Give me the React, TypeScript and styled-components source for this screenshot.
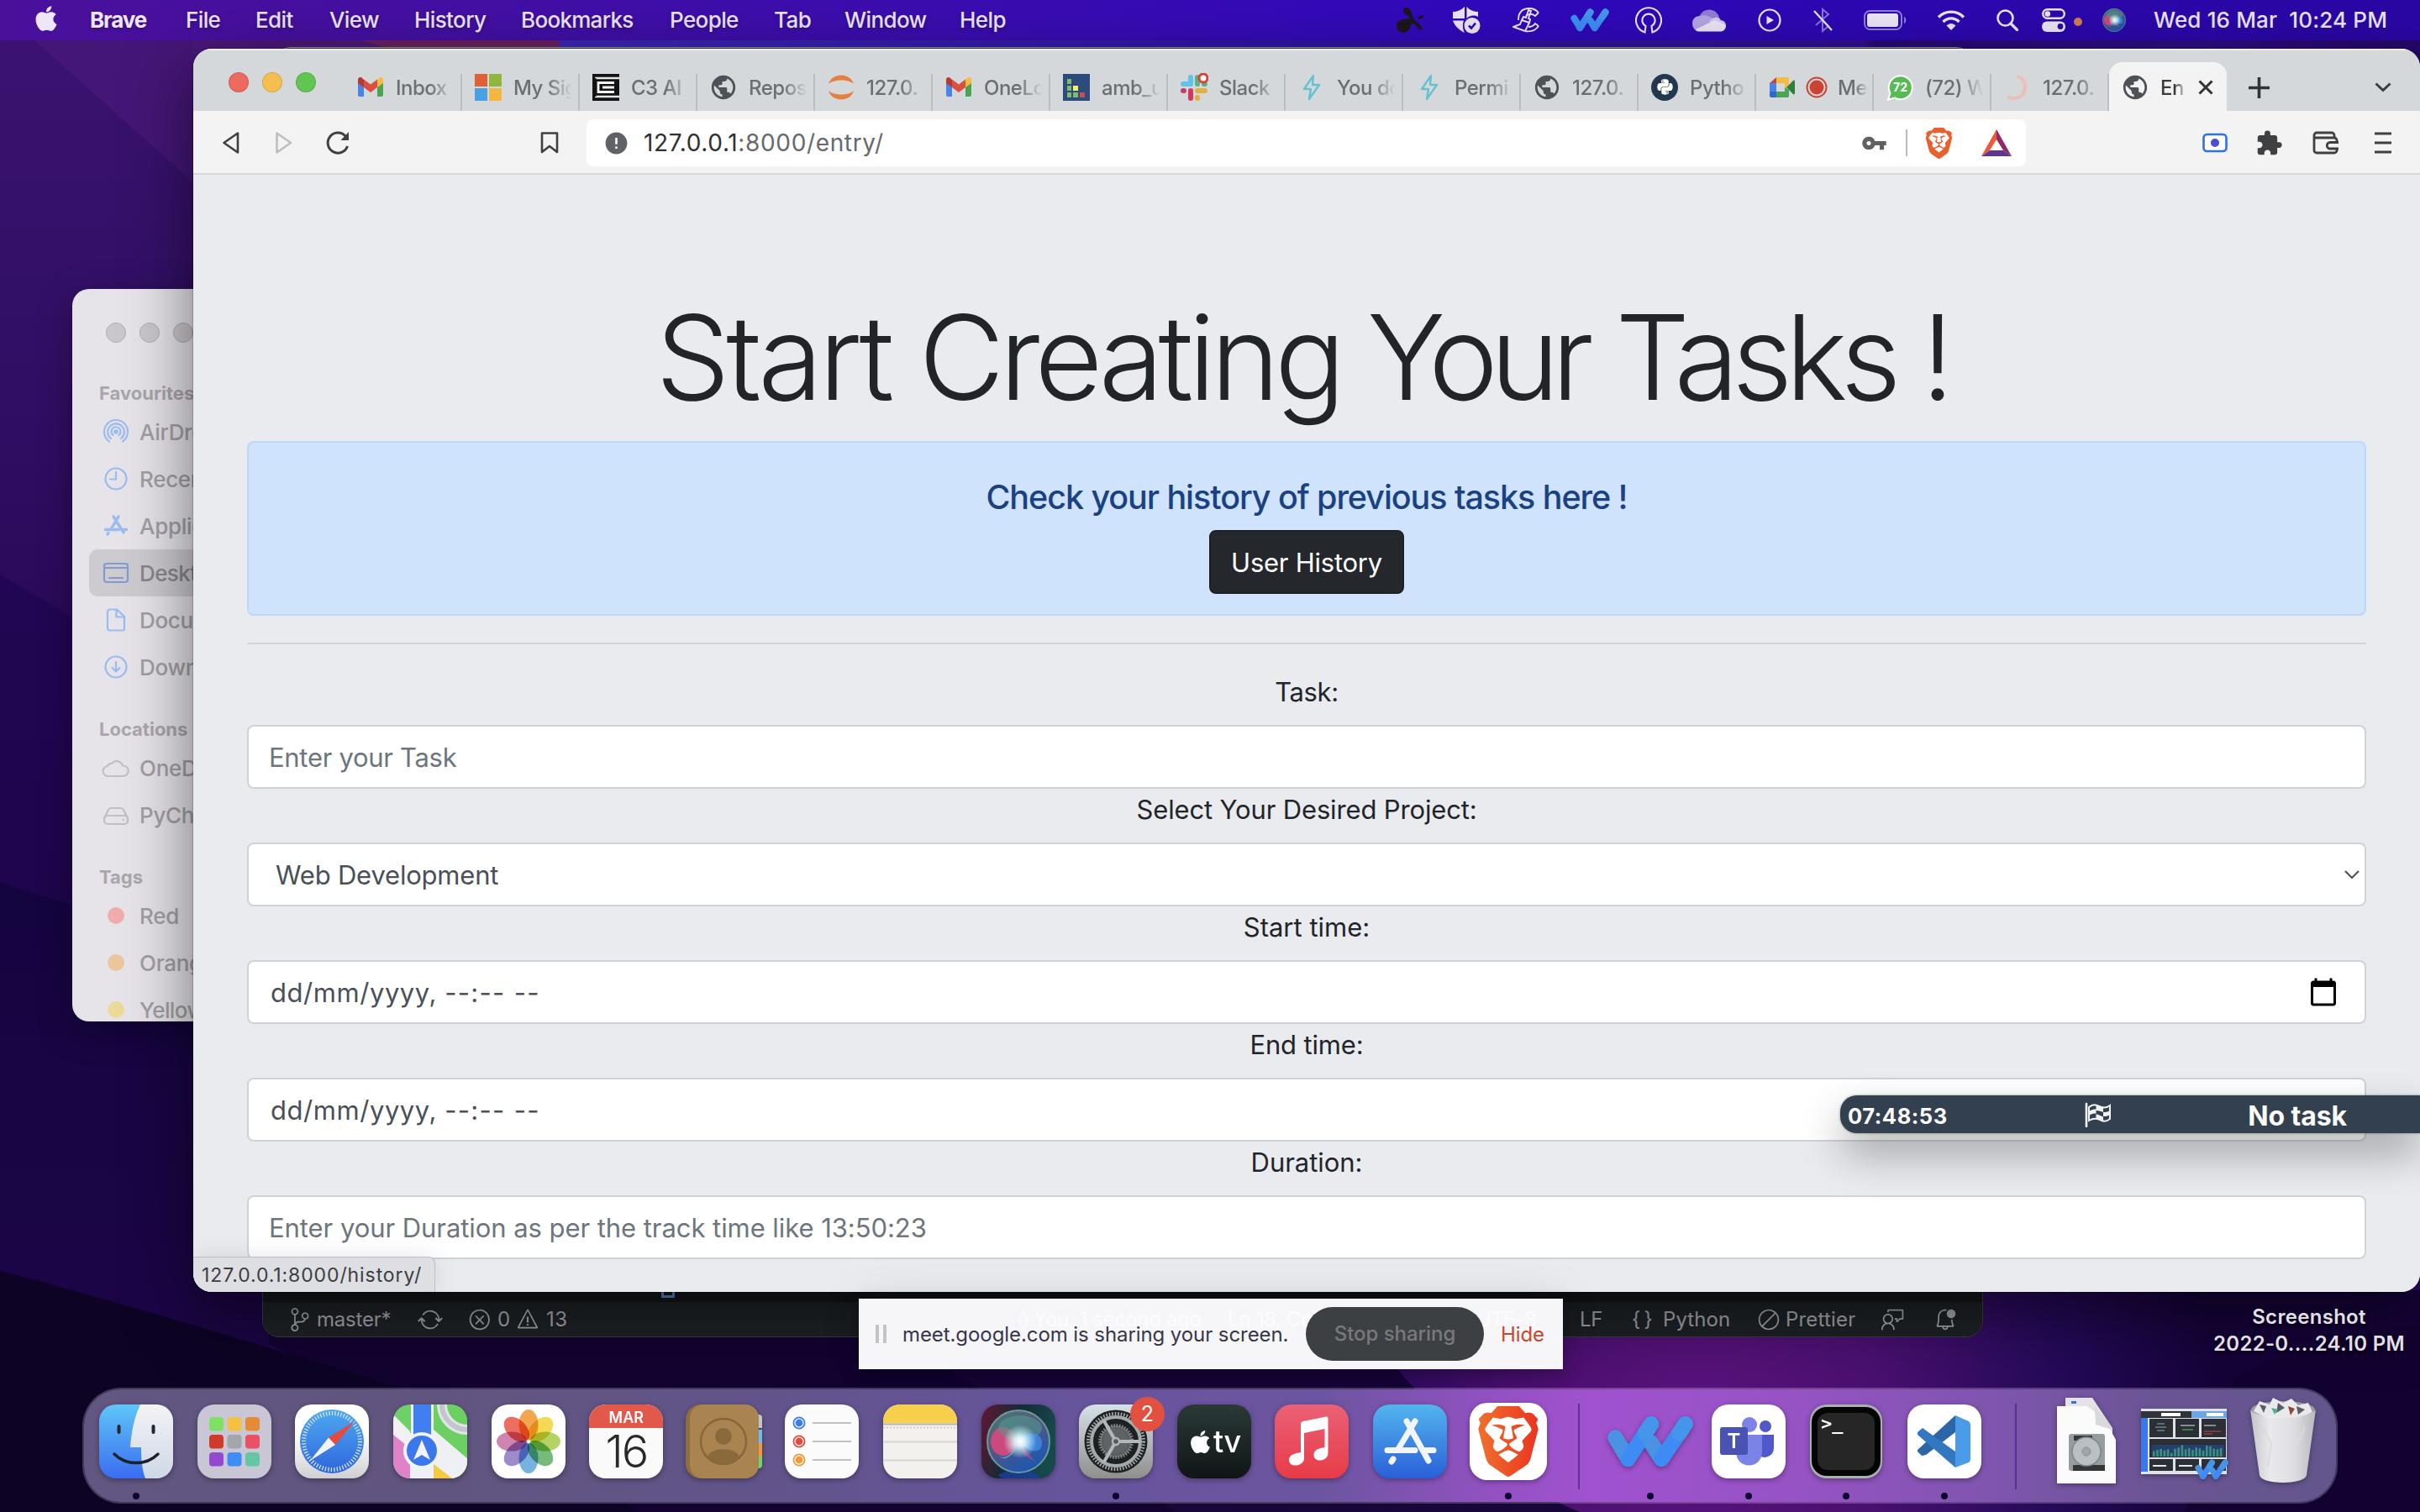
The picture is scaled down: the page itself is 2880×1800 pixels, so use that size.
import React from 'react';
import styled, { createGlobalStyle, css } from 'styled-components';
import { FaApple, FaPython } from 'react-icons/fa';
import { SiBrave } from 'react-icons/si';
import { MdPublic, MdVpnKey, MdExtension, MdCalendarToday, MdError } from 'react-icons/md';
import {
  VscSourceControl,
  VscSync,
  VscError,
  VscWarning,
  VscCircleSlash,
  VscFeedback,
  VscBellDot,
} from 'react-icons/vsc';

const sans = `Inter, "Liberation Sans", sans-serif`;

const Global = createGlobalStyle`
  * { box-sizing: border-box; }
  html, body { margin: 0; padding: 0; background: #12032f; }
  body { font-family: ${sans}; overflow: hidden; }
  svg { display: block; flex: none; }
  h1, h4, p { margin: 0; }
`;

const Desktop = styled.main`
  position: relative;
  width: 2880px;
  height: 1800px;
  overflow: hidden;
`;

const WallpaperSvg = styled.svg`
  position: absolute;
  inset: 0;
`;

const Text = styled.span<{ $track?: number }>`
  white-space: pre;
  letter-spacing: ${(p) => p.$track ?? 0}px;
`;

/* ---------- wallpaper ---------- */

const Wallpaper = () => (
  <WallpaperSvg width="2880" height="1800" viewBox="0 0 2880 1800">
    <defs>
      <linearGradient id="wpLeft" gradientUnits="userSpaceOnUse" x1="0" y1="48" x2="0" y2="760">
        <stop offset="0" stopColor="#3b1270" />
        <stop offset=".42" stopColor="#331068" />
        <stop offset="1" stopColor="#2a0959" />
      </linearGradient>
      <linearGradient id="wpMid" gradientUnits="userSpaceOnUse" x1="0" y1="684" x2="0" y2="1080">
        <stop offset="0" stopColor="#210653" />
        <stop offset="1" stopColor="#1e054c" />
      </linearGradient>
      <linearGradient id="wpLow" gradientUnits="userSpaceOnUse" x1="0" y1="1050" x2="0" y2="1520">
        <stop offset="0" stopColor="#140440" />
        <stop offset=".45" stopColor="#180543" />
        <stop offset="1" stopColor="#1b0546" />
      </linearGradient>
      <linearGradient id="wpTop" x1="0" y1="0" x2="1" y2="0">
        <stop offset="0" stopColor="#4a1878" />
        <stop offset=".16" stopColor="#4f1a76" />
        <stop offset=".165" stopColor="#3a28b4" />
        <stop offset=".5" stopColor="#3014a4" />
        <stop offset=".75" stopColor="#301092" />
        <stop offset=".755" stopColor="#280a78" />
        <stop offset=".9" stopColor="#2d0e84" />
        <stop offset="1" stopColor="#25076a" />
      </linearGradient>
      <radialGradient id="wpGlow" cx="2020" cy="1700" r="620" gradientUnits="userSpaceOnUse">
        <stop offset="0" stopColor="#5a137d" />
        <stop offset=".35" stopColor="#4a1070" />
        <stop offset=".7" stopColor="#240a58" />
        <stop offset="1" stopColor="#150338" />
      </radialGradient>
    </defs>
    <rect width="2880" height="1800" fill="url(#wpLeft)" />
    <rect x="230" y="0" width="2650" height="140" fill="url(#wpTop)" />
    <path d="M20 0H240V226L41 48Z" fill="#48187a" opacity=".75" />
    <path d="M430 48H664L668 60H470Z" fill="#6a2060" />
    <path d="M0 684L86 735L240 815V1300H0Z" fill="url(#wpMid)" />
    <path d="M0 1050L86 1078L240 1120V1800H0Z" fill="url(#wpLow)" />
    <path d="M230 1300H700V1800H230Z" fill="#1a0543" />
    <path d="M320 1560H2000V1800H690C600 1740 460 1670 320 1600Z" fill="#120330" />
    <path d="M0 1513C180 1560 300 1600 440 1640L640 1720L760 1800H0Z" fill="#0d0324" />
    <path d="M1080 1600L1400 1800H1900L1640 1600Z" fill="#170638" />
    <path d="M1600 1536H2880V1800H1880C1780 1760 1660 1650 1600 1536Z" fill="url(#wpGlow)" />
    <path d="M2660 1640Q2760 1590 2880 1578V1800H2600Z" fill="#12022f" opacity=".8" />
  </WallpaperSvg>
);

/* ---------- menu bar ---------- */

const MenuBarRoot = styled.header`
  position: absolute;
  inset: 0 0 auto 0;
  height: 48px;
  display: flex;
  align-items: center;
  padding-left: 38px;
  background: linear-gradient(90deg, #4a109a 0%, #4410a4 18%, #380cb4 45%, #3009bc 62%, #2c08b0 80%, #2a07a4 100%);
  color: #ece6f6;
  font-size: 26px;
`;

const MenuLabel = styled.span<{ $w: number; $bold?: boolean; $track?: number }>`
  width: ${(p) => p.$w}px;
  flex: none;
  white-space: nowrap;
  font-weight: ${(p) => (p.$bold ? 700 : 500)};
  letter-spacing: ${(p) => p.$track ?? -0.6}px;
  line-height: 30px;
  text-shadow: 0 2px 4px rgba(0, 0, 0, 0.25);
`;

const AppleSlot = styled.span`
  width: 69px;
  flex: none;
  padding-bottom: 4px;
`;

const StatusSlot = styled.span<{ $gap: number }>`
  margin-left: ${(p) => p.$gap}px;
  flex: none;
  display: flex;
  align-items: center;
`;

const MenuSpacer = styled.span`
  flex: 1;
`;

const Clock = styled.span`
  width: 350px;
  padding-left: 33px;
  flex: none;
  white-space: pre;
  font-weight: 500;
  letter-spacing: 0.15px;
  line-height: 30px;
`;

const menus: [string, number, number?][] = [
  ['Brave', 114, -1.1],
  ['File', 83],
  ['Edit', 88],
  ['View', 101],
  ['History', 127],
  ['Bookmarks', 177, -0.7],
  ['People', 124],
  ['Tab', 84],
  ['Window', 137],
  ['Help', 60],
];

const WMark = ({ w, h, light = false }: { w: number; h: number; light?: boolean }) => (
  <svg width={w} height={h} viewBox="0 0 102 62">
    <g fill="none" strokeLinecap="round" strokeWidth="18">
      <path d="M10 26L25 51" stroke={light ? '#3b90f2' : '#4a93e4'} />
      <path d="M52 10L25 51" stroke="#3f8bf5" />
      <path d="M52 32L64 51" stroke={light ? '#3b90f2' : '#4a93e4'} />
      <path d="M92 10L64 51" stroke="#3f8bf5" />
      <path d="M52 10L45 21M92 10L85 21" stroke="#4596ea" />
    </g>
  </svg>
);

const SplatIcon = () => (
  <svg width="32" height="32" viewBox="0 0 32 32" fill="#1b171c">
    <path d="M8 4C9 0 15 0 17 5C19 9 18 12 22 16C26 20 32 24 30 27C28 29 25 24 21 21C16 18 18 23 15 27C12 32 4 32 1 27C-2 21 2 15 8 15C12 15 16 14 15 12C13 10 7 8 8 4z" />
    <path d="M26 15c-1-3 1-4 3-4 2-1 4 0 3 1-1 2-3 2-6 3z" />
  </svg>
);

const ShieldIcon = () => (
  <svg width="34" height="34" viewBox="0 0 34 34" fill="#ece6f6">
    <path d="M1 7C6 7 11 5 15 1V15H1zM17.500 1C21 5 26 7 31 7V13C26 10 20 12 17.500 15zM1 17.500H14C12 23 13 28 15 32C7 28 3 23 1 17.500z" />
    <circle cx="24" cy="23.500" r="9.500" />
    <path d="M20 23.500l3 3 5-6" stroke="#2f09b8" strokeWidth="2.600" fill="none" />
  </svg>
);

const BrushIcon = () => (
  <svg width="32" height="32" viewBox="0 0 32 32" fill="none" stroke="#ece6f6" strokeWidth="1.900">
    <path d="M31 7L27 11C24 8 19 8 16 11M31 7C25 0 12 0 8 9 7 11 7 13 7 16M31 23L27 20C25 23 22 24 19 24M31 23C27 29 21 30 15 29" />
    <path d="M19 4l3 1-3 9 2 1-1 4-9-3 2-4 3 1zM11 16l9 3-5 10L1 24l8-3z" />
  </svg>
);

const VpnIcon = () => (
  <svg width="32" height="32" viewBox="0 0 32 32" fill="none" stroke="#ece6f6" strokeWidth="2.100">
    <path d="M11.500 30.500A15 15 0 1 1 20.500 30.500L19.500 23A7.600 7.600 0 1 0 12.500 23Z" />
  </svg>
);

const CloudIcon = () => (
  <svg width="40" height="27" viewBox="0 0 40 27">
    <circle cx="20" cy="13" r="12.500" fill="#8f7fd6" />
    <path d="M9 8C3 8 0 12 0 17c0 4 2 7 5 9L27 13C22 9 16 6 9 8z" fill="#b3a7e4" />
    <path d="M20 15C24 9 31 8 34 13c5 1 6 4 6 7l-14-3z" fill="#d2cbee" />
    <path d="M4 24L27 13l13 6c0 5-3 7.500-7 7.500H8c-2 0-3-.5-4-2.500z" fill="#ece6f6" />
  </svg>
);

const PlayCircle = () => (
  <svg width="28" height="28" viewBox="0 0 28 28" fill="none" stroke="#ece6f6" strokeWidth="2.200">
    <circle cx="14" cy="14" r="12.500" />
    <path d="M10.500 9v10l8.500-5z" fill="#ece6f6" stroke="none" />
  </svg>
);

const BluetoothOff = () => (
  <svg width="26" height="30" viewBox="0 0 26 30" fill="none" strokeWidth="2">
    <path d="M4 21L19 8 12 2V28L19 22 12 15" stroke="#8c74d8" />
    <path d="M2 4L23 27" stroke="#ece6f6" strokeWidth="2.200" />
  </svg>
);

const BatteryIcon = () => (
  <svg width="52" height="26" viewBox="0 0 52 26">
    <rect x="1" y="2" width="44" height="22" rx="6.500" fill="none" stroke="#8f7edb" strokeWidth="2" />
    <rect x="4" y="5" width="37" height="16" rx="3" fill="#ece6f6" />
    <path d="M48 9v8c3-1 3-7 0-8z" fill="#8f7edb" />
  </svg>
);

const WifiGlyph = () => (
  <svg width="34" height="26" viewBox="0 0 34 26" fill="none" stroke="#ece6f6" strokeWidth="3.400">
    <path d="M2 9.500C10 1 24 1 32 9.500" />
    <path d="M7.500 15C13 9.500 21 9.500 26.500 15" />
    <path d="M11.500 19.500C15 16 19 16 22.500 19.500L17 25z" fill="#ece6f6" stroke="none" />
  </svg>
);

const SearchGlyph = () => (
  <svg width="26" height="26" viewBox="0 0 26 26" fill="none" stroke="#ece6f6" strokeWidth="2.600">
    <circle cx="10.500" cy="10.500" r="9" />
    <path d="M17 17l7.500 7.500" strokeWidth="3.200" strokeLinecap="round" />
  </svg>
);

const ControlCenter = () => (
  <svg width="28" height="28" viewBox="0 0 28 28">
    <rect x="1.200" y="1.200" width="25.600" height="10.600" rx="5.300" fill="none" stroke="#ece6f6" strokeWidth="2.400" />
    <circle cx="6.800" cy="6.500" r="3.300" fill="#ece6f6" />
    <rect x="0" y="15.500" width="28" height="12.500" rx="6" fill="#ece6f6" />
    <circle cx="22" cy="21.500" r="3.400" fill="#2d08b0" />
  </svg>
);

const DotIcon = () => (
  <svg width="10" height="14" viewBox="0 0 10 14">
    <circle cx="5" cy="9" r="5" fill="#cf7d55" />
  </svg>
);

const SiriOrb = ({ size }: { size: number }) => (
  <svg width={size} height={size} viewBox="0 0 76 76">
    <defs>
      <radialGradient id="orbCore">
        <stop offset="0" stopColor="#fff" />
        <stop offset=".3" stopColor="#e6fbff" stopOpacity=".9" />
        <stop offset="1" stopColor="#bff" stopOpacity="0" />
      </radialGradient>
      <linearGradient id="orbBg" x1="0" y1="0" x2=".6" y2="1">
        <stop offset="0" stopColor="#3f7f72" />
        <stop offset=".45" stopColor="#5a5580" />
        <stop offset="1" stopColor="#1d57b0" />
      </linearGradient>
    </defs>
    <circle cx="38" cy="38" r="37" fill="url(#orbBg)" stroke="#79b0a0" strokeWidth="2" strokeOpacity=".8" />
    <ellipse cx="20" cy="38" rx="15" ry="17" fill="#e0487c" opacity=".85" />
    <ellipse cx="40" cy="22" rx="26" ry="15" fill="#4fa08c" opacity=".55" />
    <path d="M38 38C48 24 66 26 66 40S50 52 38 38z" fill="#3d8be8" opacity=".8" />
    <path d="M38 38C34 54 22 62 16 56c8 4 18-6 22-18z" fill="#6ad0e6" opacity=".7" />
    <path d="M38 38L58 62 44 54z" fill="#a05090" opacity=".7" />
    <circle cx="40" cy="38" r="20" fill="url(#orbCore)" />
  </svg>
);

const MenuBar = () => (
  <MenuBarRoot>
    <AppleSlot>
      <FaApple size={34} />
    </AppleSlot>
    {menus.map(([label, w, track], i) => (
      <MenuLabel key={label} $w={w} $bold={i === 0} $track={track}>
        {label}
      </MenuLabel>
    ))}
    <MenuSpacer />
    <StatusSlot $gap={0}><SplatIcon /></StatusSlot>
    <StatusSlot $gap={34}><ShieldIcon /></StatusSlot>
    <StatusSlot $gap={38}><BrushIcon /></StatusSlot>
    <StatusSlot $gap={37}><WMark w={46} h={28} light /></StatusSlot>
    <StatusSlot $gap={31}><VpnIcon /></StatusSlot>
    <StatusSlot $gap={36}><CloudIcon /></StatusSlot>
    <StatusSlot $gap={38}><PlayCircle /></StatusSlot>
    <StatusSlot $gap={37}><BluetoothOff /></StatusSlot>
    <StatusSlot $gap={35}><BatteryIcon /></StatusSlot>
    <StatusSlot $gap={35}><WifiGlyph /></StatusSlot>
    <StatusSlot $gap={37}><SearchGlyph /></StatusSlot>
    <StatusSlot $gap={28}><ControlCenter /></StatusSlot>
    <StatusSlot $gap={10}><DotIcon /></StatusSlot>
    <StatusSlot $gap={24}><SiriOrb size={28} /></StatusSlot>
    <Clock>Wed 16 Mar  10:24 PM</Clock>
  </MenuBarRoot>
);

/* ---------- Finder window ---------- */

const FinderWindow = styled.aside`
  position: absolute;
  left: 86px;
  top: 344px;
  width: 420px;
  height: 872px;
  padding: 40px 20px 0;
  border-radius: 20px;
  background: #e6e4e9;
  overflow: hidden;
  box-shadow: 0 10px 40px rgba(0, 0, 0, 0.35);
`;

const FinderLights = styled.div`
  display: flex;
  gap: 16px;
  padding-left: 20px;
  margin-bottom: 40px;
`;

const GreyLight = styled.span`
  width: 24px;
  height: 24px;
  border-radius: 50%;
  background: #cac8cc;
  border: 1px solid #b0aeb2;
`;

const SideHeader = styled.div`
  height: 38px;
  line-height: 40px;
  padding-left: 12px;
  font-size: 22px;
  font-weight: 700;
  color: #a9a7ab;
`;

const SideGroup = styled.div`
  margin-bottom: 26px;
`;

const SideItem = styled.div<{ $active?: boolean }>`
  display: flex;
  align-items: center;
  height: 56px;
  padding-left: 15px;
  gap: 11px;
  border-radius: 10px;
  font-size: 26px;
  font-weight: 500;
  color: #a19fa3;
  ${(p) =>
    p.$active &&
    css`
      background: #cdcbd0;
      color: #88868a;
    `}
`;

const SideIcon = styled.svg.attrs({ width: 34, height: 34, viewBox: '0 0 34 34' })<{
  $grey?: boolean;
  $strong?: boolean;
}>`
  fill: none;
  stroke: ${(p) => (p.$grey ? '#c2c0c5' : p.$strong ? '#7f9ecf' : '#9bbcf0')};
  stroke-width: 2.2;
  stroke-linecap: round;
`;

const TagDot = styled.span<{ $color: string }>`
  width: 20px;
  height: 20px;
  margin: 0 7px;
  border-radius: 50%;
  background: ${(p) => p.$color};
`;

const Finder = () => (
  <FinderWindow>
    <FinderLights>
      <GreyLight />
      <GreyLight />
      <GreyLight />
    </FinderLights>
    <SideGroup>
      <SideHeader>Favourites</SideHeader>
      <SideItem>
        <SideIcon>
          <circle cx="17" cy="17" r="1.600" fill="#9bbcf0" />
          <path d="M13.500 21a5.500 5.500 0 1 1 7 0M11 25a9.800 9.800 0 1 1 12 0M9 28.500a14 14 0 1 1 16 0" />
        </SideIcon>
        <Text $track={-0.3}>AirDrop</Text>
      </SideItem>
      <SideItem>
        <SideIcon>
          <circle cx="17" cy="17" r="12.500" />
          <path d="M17 9v8.500h-7" />
        </SideIcon>
        <Text $track={-0.3}>Recents</Text>
      </SideItem>
      <SideItem>
        <SideIcon>
          <g strokeWidth="3.400">
            <path d="M14 6l12 19M20 6L11 21M4.500 21.500h16M25.500 21.500h4M7 27l1-1.500" />
          </g>
        </SideIcon>
        <Text $track={-0.3}>Applications</Text>
      </SideItem>
      <SideItem $active>
        <SideIcon $strong>
          <rect x="3" y="6" width="28" height="22" rx="3" />
          <path d="M3 11h28M9 23h16" />
        </SideIcon>
        <Text $track={-0.6}>Desktop</Text>
      </SideItem>
      <SideItem>
        <SideIcon>
          <path d="M7 7a2.500 2.500 0 0 1 2.500-2.500H18L27 13V27a2.500 2.500 0 0 1-2.500 2.500h-15A2.500 2.500 0 0 1 7 27zM17.500 5v8.500H27" />
        </SideIcon>
        <Text $track={-0.3}>Documents</Text>
      </SideItem>
      <SideItem>
        <SideIcon>
          <circle cx="17" cy="17" r="12.500" />
          <path d="M17 11v11M12.500 18l4.500 4.500 4.500-4.500" />
        </SideIcon>
        <Text $track={-0.3}>Downloads</Text>
      </SideItem>
    </SideGroup>
    <SideGroup>
      <SideHeader>Locations</SideHeader>
      <SideItem>
        <SideIcon $grey>
          <path d="M8 27a6 6 0 0 1-1-12 5 5 0 0 1 5-3 7.500 7.500 0 0 1 13 2.500 6.200 6.200 0 0 1 1 12.500z" />
        </SideIcon>
        <Text $track={-0.3}>OneDrive</Text>
      </SideItem>
      <SideItem>
        <SideIcon $grey>
          <path d="M3 21l5-10a3 3 0 0 1 3-2h12a3 3 0 0 1 3 2l5 10" />
          <rect x="3" y="18" width="28" height="10" rx="4" />
          <path d="M25.500 23h.5" />
        </SideIcon>
        <Text $track={-0.3}>PyCharm</Text>
      </SideItem>
    </SideGroup>
    <SideGroup>
      <SideHeader>Tags</SideHeader>
      <SideItem>
        <TagDot $color="#f1adae" />
        <Text $track={-0.3}>Red</Text>
      </SideItem>
      <SideItem>
        <TagDot $color="#ecc69d" />
        <Text $track={-0.3}>Orange</Text>
      </SideItem>
      <SideItem>
        <TagDot $color="#eadb98" />
        <Text $track={-0.6}>Yellow</Text>
      </SideItem>
    </SideGroup>
  </FinderWindow>
);

/* ---------- editor window peeking out below ---------- */

const BackWindow = styled.div`
  position: absolute;
  left: 326px;
  top: 56px;
  width: 2022px;
  height: 40px;
  border-radius: 20px 20px 0 0;
  background: #4a4a50;
  border-top: 1px solid #9a9a94;
`;

const EditorWindow = styled.section`
  position: absolute;
  left: 312px;
  top: 1480px;
  width: 2048px;
  height: 112px;
  padding-top: 68px;
  display: flex;
  flex-direction: column;
  background: #14181b;
  border: 1px solid #3a3d41;
  border-radius: 0 0 20px 20px;
  overflow: hidden;
`;

const EditorStatus = styled.div`
  flex: 1;
  display: flex;
  align-items: center;
  background: #1e2226;
  border-top: 1px solid #111417;
  color: #a4a7aa;
  font-size: 24px;
  padding: 0 30px 0 30px;
`;

const StatusItem = styled.span<{ $w: number; $gap?: number; $track?: number }>`
  width: ${(p) => p.$w}px;
  flex: none;
  display: flex;
  align-items: center;
  gap: ${(p) => p.$gap ?? 9}px;
  white-space: nowrap;
  letter-spacing: ${(p) => p.$track ?? -0.2}px;
`;

const EditorCaret = styled.span`
  position: absolute;
  left: 474px;
  top: 48px;
  width: 16px;
  height: 16px;
  border: 3px solid #5f86c0;
`;

const Editor = () => (
  <EditorWindow>
    <EditorCaret />
    <EditorStatus>
      <StatusItem $w={154} $gap={6}><VscSourceControl size={28} />master*</StatusItem>
      <StatusItem $w={60}><VscSync size={30} /></StatusItem>
      <StatusItem $w={57} $gap={7}><VscError size={28} />0</StatusItem>
      <StatusItem $w={1266} $gap={8} $track={0.6}><VscWarning size={28} />13</StatusItem>
      <StatusItem $w={62}>LF</StatusItem>
      <StatusItem $w={37} $track={-1.2}>{'{ }'}</StatusItem>
      <StatusItem $w={112} $track={0.1}>Python</StatusItem>
      <StatusItem $w={148} $gap={6} $track={0.2}><VscCircleSlash size={28} />Prettier</StatusItem>
      <StatusItem $w={62}><VscFeedback size={28} /></StatusItem>
      <StatusItem $w={30}><VscBellDot size={28} /></StatusItem>
    </EditorStatus>
  </EditorWindow>
);

/* ---------- browser window ---------- */

const BrowserWindow = styled.section`
  position: absolute;
  left: 230px;
  top: 58px;
  width: 2650px;
  height: 1480px;
  display: flex;
  flex-direction: column;
  border-radius: 22px;
  overflow: hidden;
  background: #eaebef;
`;

const BrowserShadow = styled.div`
  position: absolute;
  left: 230px;
  top: 58px;
  width: 2650px;
  height: 1480px;
  border-radius: 22px;
  box-shadow: 0 0 2px rgba(0, 0, 0, 0.6), 0 24px 80px rgba(0, 0, 0, 0.52);
`;

const TabStrip = styled.div`
  height: 74px;
  flex: none;
  display: flex;
  align-items: flex-end;
  background: #d5d8da;
  border-top: 2px solid #eceeef;
`;

const Lights = styled.div`
  width: 180px;
  height: 72px;
  padding: 3px 0 0 42px;
  display: flex;
  align-items: center;
  gap: 16px;
`;

const Light = styled.span<{ $color: string }>`
  width: 24px;
  height: 24px;
  border-radius: 50%;
  background: ${(p) => p.$color};
  border: 1px solid rgba(0, 0, 0, 0.12);
`;

const TabRoot = styled.div<{ $active?: boolean }>`
  width: 140px;
  height: 44px;
  flex: none;
  display: flex;
  align-items: flex-start;
  padding-left: 15px;
  gap: 14px;
  border-right: 2px solid #bcbfc1;
  font-size: 24px;
  font-weight: 500;
  line-height: 33px;
  color: #6b6e72;
  ${(p) =>
    p.$active &&
    css`
      height: 58px;
      padding-top: 14px;
      background: #f3f3f3;
      border-right: 0;
      border-radius: 16px 16px 0 0;
      color: #3a3b3d;
    `}
`;

const TabIconBox = styled.span<{ $w?: number }>`
  width: ${(p) => p.$w ?? 32}px;
  height: 32px;
  flex: none;
  display: flex;
  align-items: center;
  justify-content: center;
`;

const TabTitle = styled.span<{ $w?: number }>`
  width: ${(p) => p.$w ?? 70}px;
  flex: none;
  overflow: hidden;
  white-space: nowrap;
  letter-spacing: -0.5px;
  mask-image: linear-gradient(90deg, #000 58%, transparent 100%);
`;

const TabAction = styled.span<{ $ml: number }>`
  height: 58px;
  margin-left: ${(p) => p.$ml}px;
  padding-top: 14px;
  display: flex;
  align-items: flex-start;
`;

const GmailIcon = () => (
  <svg width="30" height="24" viewBox="0 0 30 24">
    <path d="M0 3v18a2 2 0 0 0 2 2h5V8z" fill="#4a82ec" />
    <path d="M30 3v18a2 2 0 0 1-2 2h-5V8z" fill="#4aa552" />
    <path d="M23 3v9l7-5V3c0-3-3-4-5-2z" fill="#f2bd42" />
    <path d="M7 3v9L0 7V3c0-3 3-4 5-2z" fill="#b63a32" />
    <path d="M7 2.500l8 6 8-6V12l-8 6-8-6z" fill="#d85040" />
  </svg>
);

const MicrosoftIcon = () => (
  <svg width="32" height="32" viewBox="0 0 32 32">
    <path fill="#df6237" d="M0 0h15v15H0z" />
    <path fill="#8fb63f" d="M17 0h15v15H17z" />
    <path fill="#4ba0e4" d="M0 17h15v15H0z" />
    <path fill="#f2b742" d="M17 17h15v15H17z" />
  </svg>
);

const C3Icon = () => (
  <svg width="32" height="32" viewBox="0 0 32 32">
    <path fill="#131313" d="M0 0h32v32H0z" />
    <path d="M32 5H3M3 27h29" stroke="#e4e4e5" strokeWidth="2.600" fill="none" />
    <path d="M3 5V27" stroke="#131313" strokeWidth="3" />
    <path d="M26 10.500H7V21.500H26M12 16H26" stroke="#f6f6f6" strokeWidth="2.800" fill="none" />
  </svg>
);

const JupyterIcon = () => (
  <svg width="32" height="32" viewBox="0 0 32 32" fill="#e38040">
    <path d="M1 12C5 -2 27 -2 31 12C25 6 7 6 1 12z" />
    <path d="M1 20C5 34 27 34 31 20C25 26 7 26 1 20z" />
  </svg>
);

const AmbIcon = () => (
  <svg width="32" height="32" viewBox="0 0 32 32">
    <path fill="#2d4c7c" d="M0 0h32v32H0z" />
    <path fill="#7fbb6c" d="M5 6h5v6H5zM5 14h5v6H5zM5 22h5v6H5zM12 22h6v6h-6z" />
    <path fill="#f4f36b" d="M12 14h6v6h-6z" />
    <path fill="#c94d55" d="M20 22h6v6h-6z" />
  </svg>
);

const SlackIcon = () => (
  <svg width="34" height="34" viewBox="0 0 34 34">
    <g strokeLinecap="round" strokeWidth="6">
      <path d="M13 5v8M4 13h7" stroke="#5fc3ea" />
      <path d="M21 13V5M29 13h1" stroke="#59b385" />
      <path d="M21 21h9M21 29v1" stroke="#e3b03f" />
      <path d="M13 21v9M4 21h1" stroke="#cf3a62" />
    </g>
    <circle cx="28" cy="6" r="5" fill="#fff" stroke="#df4034" strokeWidth="3" />
  </svg>
);

const BoltIcon = () => (
  <svg width="24" height="32" viewBox="0 0 24 32" fill="none" stroke="#67c1d0" strokeWidth="2.400">
    <path d="M14 2L3 18h8L9 30 21 13h-8z" strokeLinejoin="round" />
  </svg>
);

const PythonIcon = () => (
  <svg width="32" height="32" viewBox="0 0 32 32">
    <circle cx="16" cy="16" r="16" fill="#22384f" />
    <FaPython x={6} y={5} size={21} color="#fff" />
  </svg>
);

const MeetIcon = () => (
  <svg width="30" height="24" viewBox="0 0 30 24">
    <path fill="#4a82ec" d="M0 7h8v10H0z" />
    <path fill="#c6463a" d="M0 7L8 0v7z" />
    <path fill="#f2bd42" d="M8 0h13a2 2 0 0 1 2 2v9l-5 3V7H8z" />
    <path fill="#4aa552" d="M8 17h10v-5l5 3v7a2 2 0 0 1-2 2H8z" />
    <path fill="#3368c8" d="M0 17h8v7H2a2 2 0 0 1-2-2z" />
    <path fill="#2f7f3c" d="M20 12l8-8c1-1 2 0 2 1v14c0 1-1 2-2 1z" />
  </svg>
);

const RecordDot = () => (
  <svg width="26" height="26" viewBox="0 0 26 26">
    <circle cx="13" cy="13" r="11.500" fill="none" stroke="#cb4334" strokeWidth="2" />
    <circle cx="13" cy="13" r="8.500" fill="#cb4334" />
  </svg>
);

const ChatBadge = () => (
  <svg width="32" height="32" viewBox="0 0 32 32">
    <path d="M2 30.500L4.500 23A14 14 0 1 1 10 28.500z" fill="#57bb54" stroke="#fff" strokeWidth="2" />
    <text x="16.500" y="21" textAnchor="middle" fontFamily={sans} fontWeight="700" fontSize="14" fill="#fff">
      72
    </text>
  </svg>
);

const SpinnerIcon = () => (
  <svg width="32" height="32" viewBox="0 0 32 32" fill="none" stroke="#eebdb8" strokeWidth="4" strokeLinecap="round">
    <path d="M17 3A13 13 0 0 1 6 28" />
  </svg>
);

const Globe = () => <MdPublic size={34} color="#4e5157" />;

type TabDef = { icon: React.ReactNode; title: string; extra?: boolean };
const tabs: TabDef[] = [
  { icon: <GmailIcon />, title: 'Inbox' },
  { icon: <MicrosoftIcon />, title: 'My Sig' },
  { icon: <C3Icon />, title: 'C3 AI' },
  { icon: <Globe />, title: 'Repos' },
  { icon: <JupyterIcon />, title: '127.0.' },
  { icon: <GmailIcon />, title: 'OneLo' },
  { icon: <AmbIcon />, title: 'amb_u' },
  { icon: <SlackIcon />, title: 'Slack' },
  { icon: <BoltIcon />, title: 'You do' },
  { icon: <BoltIcon />, title: 'Permi' },
  { icon: <Globe />, title: '127.0.' },
  { icon: <PythonIcon />, title: 'Pytho' },
  { icon: <MeetIcon />, title: 'Me', extra: true },
  { icon: <ChatBadge />, title: '(72) W' },
  { icon: <SpinnerIcon />, title: '127.0.' },
];

const Toolbar = styled.div`
  height: 76px;
  flex: none;
  display: flex;
  align-items: center;
  padding: 2px 28px 0 29px;
  background: #f3f3f3;
  border-bottom: 2px solid #d3d7da;
`;

const ToolSlot = styled.span<{ $ml?: number }>`
  width: 32px;
  margin-left: ${(p) => p.$ml ?? 0}px;
  flex: none;
  display: flex;
  justify-content: center;
`;

const UrlField = styled.div`
  width: 1713px;
  height: 56px;
  margin-left: 28px;
  padding: 0 17px 0 20px;
  display: flex;
  align-items: center;
  border-radius: 8px;
  background: #fff;
`;

const UrlText = styled.span`
  flex: 1;
  margin-left: 17px;
  font-size: 28px;
  letter-spacing: 0.65px;
  color: #66696d;
  b { font-weight: 400; color: #2f3032; }
`;

const UrlDivider = styled.span`
  width: 2px;
  height: 32px;
  margin: 0 19px 0 22px;
  background: #b9bbbe;
`;

const LionSlot = styled.span`
  margin-right: 32px;
`;

const Page = styled.div`
  flex: 1;
  padding: 131px 64px 0 64px;
  background: #eaebef;
  font-size: 31px;
  color: #212529;
`;

const Title = styled.h1`
  height: 173px;
  margin-bottom: 13px;
  font-size: 140px;
  line-height: 173px;
  font-weight: 335;
  text-align: center;
  white-space: pre;
`;

const titleRuns: [string, number][] = [
  ['Start', -4.6],
  [' ', -5.4],
  ['Creating', -6.1],
  [' ', -7.7],
  ['Your', -9.5],
  [' ', -4.3],
  ['Tasks', -8.5],
  [' ', -7.1],
  ['!', 4],
];

const Alert = styled.div`
  height: 208px;
  padding-top: 41px;
  display: flex;
  flex-direction: column;
  align-items: center;
  gap: 15px;
  border: 2px solid #bcd7fb;
  border-radius: 8px;
  background: #d0e3fc;
`;

const AlertHeading = styled.h4`
  font-size: 39.5px;
  line-height: 48px;
  font-weight: 500;
  letter-spacing: -1.07px;
  color: #1a4183;
`;

const DarkButton = styled.button`
  width: 232px;
  height: 76px;
  padding: 0;
  border: 2px solid #1d2024;
  border-radius: 8px;
  background: #24272b;
  color: #fff;
  font: 400 31px/73px ${sans};
  letter-spacing: -0.25px;
`;

const Rule = styled.div`
  height: 2px;
  margin: 32px 0 32px;
  background: #d2d4d8;
`;

const FieldLabel = styled.label<{ $track?: number }>`
  display: block;
  height: 64px;
  line-height: 50px;
  text-align: center;
  letter-spacing: ${(p) => p.$track ?? -0.15}px;
`;

const Control = styled.div<{ $pad?: number; $placeholder?: boolean }>`
  height: 76px;
  padding: 0 0 0 ${(p) => p.$pad ?? 24}px;
  display: flex;
  align-items: center;
  justify-content: space-between;
  border: 2px solid #ced3d8;
  border-radius: 8px;
  background: #fff;
  color: ${(p) => (p.$placeholder ? '#6d757d' : '#495057')};
  white-space: pre;
`;

const ChevronSlot = styled.span`
  margin-right: 6px;
`;

const CalendarSlot = styled.span`
  margin-right: 31px;
  color: #000;
`;

const HoverUrl = styled.div`
  position: absolute;
  left: 0;
  bottom: 0;
  width: 288px;
  height: 42px;
  padding-left: 10px;
  line-height: 42px;
  font-size: 23px;
  letter-spacing: 0.9px;
  color: #3c3d3f;
  background: #dedfe2;
  border: 1px solid #bfc0c3;
  border-left: 0;
  border-bottom: 0;
  border-radius: 0 8px 0 0;
  box-shadow: 0 0 30px rgba(0, 0, 0, 0.1);
`;

const DateTimeValue = () => (
  <span>
    <Text $track={0.55}>dd/mm/yyyy, </Text>
    <Text $track={1.3}>--:-- --</Text>
  </span>
);

const Browser = () => (
  <BrowserWindow>
    <TabStrip>
      <Lights>
        <Light $color="#ec6a5e" />
        <Light $color="#f4bf4f" />
        <Light $color="#61c554" />
      </Lights>
      {tabs.map((t, i) => (
        <TabRoot key={i}>
          <TabIconBox>{t.icon}</TabIconBox>
          {t.extra && (
            <TabIconBox $w={22}>
              <RecordDot />
            </TabIconBox>
          )}
          <TabTitle $w={t.extra ? 36 : undefined}>{t.title}</TabTitle>
        </TabRoot>
      ))}
      <TabRoot $active>
        <TabIconBox>
          <Globe />
        </TabIconBox>
        <TabTitle $w={31}>En</TabTitle>
        <TabIconBox $w={18}>
          <svg width="18" height="18" viewBox="0 0 18 18" stroke="#323335" strokeWidth="3">
            <path d="M1.500 1.500l15 15M16.500 1.500l-15 15" />
          </svg>
        </TabIconBox>
      </TabRoot>
      <TabAction $ml={22}>
        <TabIconBox>
          <svg width="25" height="25" viewBox="0 0 25 25" stroke="#323335" strokeWidth="3.600">
            <path d="M12.500 0v25M0 12.500h25" />
          </svg>
        </TabIconBox>
      </TabAction>
      <TabAction $ml={116}>
        <TabIconBox>
          <svg width="20" height="12" viewBox="0 0 20 12" fill="none" stroke="#3a3b3d" strokeWidth="3">
            <path d="M1.500 1.500l8.500 8 8.500-8" />
          </svg>
        </TabIconBox>
      </TabAction>
    </TabStrip>
    <Toolbar>
      <ToolSlot>
        <svg width="22" height="28" viewBox="0 0 22 28" fill="none" stroke="#3f4042" strokeWidth="2.600">
          <path d="M19 2.500v23L2.500 14z" strokeLinejoin="round" />
        </svg>
      </ToolSlot>
      <ToolSlot $ml={31}>
        <svg width="22" height="28" viewBox="0 0 22 28" fill="none" stroke="#bdbebf" strokeWidth="2.600">
          <path d="M2.500 2.500v23L19 14z" strokeLinejoin="round" />
        </svg>
      </ToolSlot>
      <ToolSlot $ml={32}>
        <svg width="30" height="30" viewBox="0 0 30 30" fill="none" stroke="#3f4042" strokeWidth="3">
          <path d="M26.500 19A12 12 0 1 1 24 7" />
          <path d="M28 2v10H18.500z" fill="#3f4042" stroke="none" />
        </svg>
      </ToolSlot>
      <ToolSlot $ml={220}>
        <svg width="22" height="28" viewBox="0 0 22 28" fill="none" stroke="#3f4042" strokeWidth="2.600">
          <path d="M2 2.500h18V25l-9-7-9 7z" strokeLinejoin="round" />
        </svg>
      </ToolSlot>
      <UrlField>
        <MdError size={31} color="#5f6368" />
        <UrlText>
          <b>127.0.0.1</b>:8000/entry/
        </UrlText>
        <MdVpnKey size={31} color="#5f6163" />
        <UrlDivider />
        <LionSlot>
          <SiBrave size={37} color="#eb5f2b" />
        </LionSlot>
        <svg width="36" height="32" viewBox="0 0 36 32">
          <path d="M18 0L0 32 10 25 18 12z" fill="#ed5a37" />
          <path d="M18 0L36 32 26 25 18 12z" fill="#8e2c63" />
          <path d="M0 32h36L26 25H10z" fill="#5f3590" />
        </svg>
      </UrlField>
      <ToolSlot $ml={209}>
        <svg width="30" height="24" viewBox="0 0 30 24">
          <rect x="1.500" y="2" width="27" height="20" rx="4" fill="#fff" stroke="#2f6df2" strokeWidth="2.600" />
          <circle cx="15" cy="12" r="5" fill="#4a4ed0" />
        </svg>
      </ToolSlot>
      <ToolSlot $ml={32}>
        <MdExtension size={33} color="#3f4042" />
      </ToolSlot>
      <ToolSlot $ml={36}>
        <svg width="32" height="28" viewBox="0 0 32 28" fill="none" stroke="#3f4042" strokeWidth="2.800">
          <path d="M26 8V5a3 3 0 0 0-3-3H5a3 3 0 0 0-3 3v18a3 3 0 0 0 3 3h21a3 3 0 0 0 3-3V11a3 3 0 0 0-3-3H2" />
          <path d="M31 13.500H21a3.500 3.500 0 0 0 0 7.500h10" fill="#f3f3f3" />
        </svg>
      </ToolSlot>
      <ToolSlot $ml={36}>
        <svg width="20" height="26" viewBox="0 0 20 26" stroke="#3f4042" strokeWidth="3">
          <path d="M0 2h20M0 13h20M0 24h20" />
        </svg>
      </ToolSlot>
    </Toolbar>
    <Page>
      <Title>
        {titleRuns.map(([run, track], i) => (
          <Text key={i} $track={track}>
            {run}
          </Text>
        ))}
      </Title>
      <Alert>
        <AlertHeading>Check your history of previous tasks here !</AlertHeading>
        <DarkButton>User History</DarkButton>
      </Alert>
      <Rule />
      <FieldLabel $track={-0.4}>Task:</FieldLabel>
      <Control $placeholder>
        <Text $track={-0.3}>Enter your Task</Text>
      </Control>
      <FieldLabel>Select Your Desired Project:</FieldLabel>
      <Control $pad={32}>
        <Text $track={-0.2}>Web Development</Text>
        <ChevronSlot>
          <svg width="18" height="12" viewBox="0 0 18 12" fill="none" stroke="#4c5258" strokeWidth="2.200">
            <path d="M1 2l8 8 8-8" />
          </svg>
        </ChevronSlot>
      </Control>
      <FieldLabel $track={0}>Start time:</FieldLabel>
      <Control $pad={26}>
        <DateTimeValue />
        <CalendarSlot>
          <MdCalendarToday size={36} />
        </CalendarSlot>
      </Control>
      <FieldLabel>End time:</FieldLabel>
      <Control $pad={26}>
        <DateTimeValue />
        <CalendarSlot>
          <MdCalendarToday size={36} />
        </CalendarSlot>
      </Control>
      <FieldLabel $track={-0.05}>Duration:</FieldLabel>
      <Control $placeholder>
        <Text $track={-0.06}>Enter your Duration as per the track time like 13:50:23</Text>
      </Control>
    </Page>
    <HoverUrl>127.0.0.1:8000/history/</HoverUrl>
  </BrowserWindow>
);

/* ---------- floating bars ---------- */

const TrackerBar = styled.div`
  position: absolute;
  left: 2190px;
  top: 1304px;
  width: 690px;
  height: 45px;
  padding: 0 87px 0 9px;
  display: flex;
  align-items: center;
  justify-content: space-between;
  border-radius: 20px 0 0 20px;
  background: #334050;
  color: #fbfbfc;
  font-weight: 700;
  box-shadow: 0 24px 50px rgba(0, 0, 0, 0.32), 0 0 3px rgba(0, 0, 0, 0.4);
`;

const TrackerTime = styled.span`
  width: 120px;
  padding-top: 4px;
  font-size: 25.5px;
  letter-spacing: 0.55px;
`;

const TrackerTask = styled.span`
  padding-top: 3px;
  font-size: 32px;
  letter-spacing: -0.1px;
`;

const FlagIcon = () => (
  <svg width="32" height="30" viewBox="0 0 32 30" fill="none" stroke="#f3f3f5" strokeWidth="2">
    <path d="M2 2v27" strokeWidth="2.600" strokeLinecap="round" />
    <path d="M5 6c5-4 8-3 12-1s8 3 13-1v16c-5 4-8 3-12 1s-8-2-13 1z" />
    <path d="M13.500 4c3 0 5 2 8.500 3v5c-3-1-5-2-8.500-2zM5 11c4-2 6-3 8.500-2v5c-3-1-5 0-8.500 2zM22 12c3 0 5 0 8-2v5c-3 2-5 2-8 2zM13.500 14.500c3 0 5 2 8.500 3v5c-3-1-5-2-8.500-2z" fill="#f3f3f5" stroke="none" />
  </svg>
);

const ShareBar = styled.div`
  position: absolute;
  left: 1022px;
  top: 1546px;
  width: 838px;
  height: 84px;
  display: flex;
  align-items: center;
  padding-left: 20px;
  background: #f6f5f7;
  font-size: 24px;
  color: #37374a;
  box-shadow: 0 6px 20px rgba(0, 0, 0, 0.3), 0 -10px 60px rgba(0, 0, 0, 0.06);
`;

const Grip = styled.span`
  width: 13px;
  height: 22px;
  margin-right: 19px;
  border: solid #c3c3c6;
  border-width: 0 4px;
`;

const ShareText = styled.span`
  position: relative;
  width: 480px;
  white-space: nowrap;
  letter-spacing: -0.08px;
`;

const StopButton = styled.button`
  position: relative;
  width: 212px;
  height: 64px;
  padding: 0;
  border: 0;
  border-radius: 32px;
  background: #3d4043;
  color: #77797d;
  font: 500 24px/64px ${sans};
  letter-spacing: -0.05px;
`;

const HideLink = styled.span`
  position: relative;
  margin-left: 20px;
  color: #c5482e;
  letter-spacing: -0.1px;
`;

const GhostRow = styled.div`
  position: absolute;
  left: 190px;
  top: 8px;
  display: flex;
  height: 32px;
  align-items: center;
  gap: 32px;
  white-space: nowrap;
  color: #fcfcfd;
`;

const ScreenshotFile = styled.div`
  position: absolute;
  left: 2620px;
  top: 1552px;
  width: 256px;
  text-align: center;
  font-size: 24px;
  line-height: 32px;
  font-weight: 600;
  letter-spacing: 0.3px;
  color: #e2dee8;
  text-shadow: 0 2px 4px rgba(0, 0, 0, 0.8);
`;

/* ---------- dock ---------- */

const DockRoot = styled.nav`
  position: absolute;
  left: 98px;
  top: 1652px;
  width: 2684px;
  height: 138px;
  padding-left: 4px;
  display: flex;
  align-items: stretch;
  border-radius: 46px;
  border: 2px solid rgba(255, 255, 255, 0.22);
  background: linear-gradient(
    90deg,
    #625782 0%,
    #61557f 15%,
    #62548a 30%,
    #66549a 42%,
    #6c55a0 55%,
    #9551c4 63%,
    #a052cf 67%,
    #9653c4 76%,
    #7e55ae 85%,
    #6a5594 92%,
    #63568c 100%
  );
  background-clip: padding-box;
`;

const DockCell = styled.div`
  position: relative;
  width: 116.6px;
  flex: none;
  display: flex;
  justify-content: center;
  padding-top: 18px;
`;

const DockArt = styled.span<{ $lift?: number }>`
  height: 88px;
  margin-top: ${(p) => -(p.$lift ?? 0)}px;
  filter: drop-shadow(0 2px 3px rgba(0, 0, 0, 0.35));
`;

const RunningDot = styled.span`
  position: absolute;
  left: calc(50% - 4px);
  bottom: 3px;
  width: 8px;
  height: 8px;
  border-radius: 50%;
  background: #0c0330;
`;

const Badge = styled.span`
  position: absolute;
  left: 75px;
  top: 9px;
  width: 41px;
  height: 41px;
  border-radius: 50%;
  background: #e2503f;
  color: #fff;
  font-size: 25px;
  line-height: 41px;
  text-align: center;
`;

const DockDivider = styled.div<{ $w: number }>`
  width: ${(p) => p.$w}px;
  flex: none;
  display: flex;
  justify-content: center;
  padding-top: 17px;
  &::after {
    content: '';
    width: 2px;
    height: 102px;
    background: rgba(70, 25, 130, 0.65);
  }
`;

const Tile = ({ children, fill = '#fff' }: { children?: React.ReactNode; fill?: string }) => (
  <svg width="88" height="88" viewBox="0 0 88 88">
    <rect width="88" height="88" rx="20" fill={fill} />
    {children}
  </svg>
);

const FinderApp = () => (
  <svg width="88" height="88" viewBox="0 0 88 88">
    <defs>
      <linearGradient id="fBlue" x1="0" y1="0" x2="0" y2="1">
        <stop offset="0" stopColor="#5fc6f8" />
        <stop offset="1" stopColor="#3a6cf0" />
      </linearGradient>
      <linearGradient id="fWhite" x1="0" y1="0" x2="0" y2="1">
        <stop offset="0" stopColor="#f3f3f5" />
        <stop offset="1" stopColor="#cfd8e6" />
      </linearGradient>
      <clipPath id="fClip"><rect width="88" height="88" rx="20" /></clipPath>
    </defs>
    <g clipPath="url(#fClip)">
      <rect width="88" height="88" fill="url(#fBlue)" />
      <path d="M49 0C42 14 38 34 37 51H50C50 64 51 78 55 88H88V0Z" fill="url(#fWhite)" />
      <path d="M23.500 26v7M64.500 26v7" stroke="#23262e" strokeWidth="4" strokeLinecap="round" />
      <path d="M18 59C32 73 56 73 70 59" fill="none" stroke="#1c2028" strokeWidth="3.400" strokeLinecap="round" />
    </g>
  </svg>
);

const launchColors = ['#7fe066', '#f4c142', '#e58a35', '#cf3a2b', '#a3a6aa', '#ea5165', '#9348cf', '#3d8df5', '#63c7a4'];
const LaunchpadApp = () => (
  <Tile fill="#c9c6d5">
    {launchColors.map((c, i) => (
      <rect key={i} x={14 + (i % 3) * 21.5} y={15 + Math.floor(i / 3) * 21} width="17" height="16.500" rx="4" fill={c} />
    ))}
  </Tile>
);

const SafariApp = () => (
  <svg width="88" height="88" viewBox="0 0 88 88">
    <defs>
      <linearGradient id="sBg" x1="0" y1="0" x2="0" y2="1">
        <stop offset=".4" stopColor="#fff" />
        <stop offset="1" stopColor="#d0d0d2" />
      </linearGradient>
      <linearGradient id="sBlue" x1="0" y1="0" x2="0" y2="1">
        <stop offset="0" stopColor="#4da9f0" />
        <stop offset="1" stopColor="#2f66dd" />
      </linearGradient>
    </defs>
    <rect width="88" height="88" rx="20" fill="url(#sBg)" />
    <circle cx="44" cy="44" r="38" fill="url(#sBlue)" />
    <circle cx="44" cy="44" r="33.500" fill="none" stroke="#d6e6fb" strokeWidth="5" strokeDasharray="1.300 2.200" />
    <path d="M71 20L40 39.500 48 48z" fill="#e8493c" />
    <path d="M18 67L40 39.500 48 48z" fill="#f3f3f5" />
  </svg>
);

const MapsApp = () => (
  <svg width="88" height="88" viewBox="0 0 88 88">
    <defs>
      <clipPath id="mClip"><rect width="88" height="88" rx="20" /></clipPath>
    </defs>
    <g clipPath="url(#mClip)">
      <rect width="88" height="88" fill="#6fd068" />
      <path d="M46 28L88 64V88H20V34z" fill="#eff0f4" />
      <path d="M46 0H88V64L46 28z" fill="#6bcf62" />
      <path d="M0 34L20 50V88H0z" fill="#de83c8" />
      <path d="M0 12L20 32V52L0 36z" fill="#f1f1f4" />
      <path d="M47 70L70 88H47z" fill="#f4c944" />
      <path d="M88 30A30 30 0 0 1 58 0" fill="none" stroke="#e2e4e8" strokeWidth="12" />
      <path d="M88 30A30 30 0 0 1 58 0" fill="none" stroke="#c1c5cd" strokeWidth="6" />
      <path d="M21 0H48V88H21z" fill="#eef0f4" />
      <path d="M24 0H45V40H24z" fill="#3f7ff0" />
      <circle cx="34" cy="55" r="22" fill="#f2f3f6" />
      <circle cx="34" cy="55" r="18" fill="#3b78ee" />
      <path d="M34 42l10 24-10-6-10 6z" fill="#f4f4f7" />
    </g>
  </svg>
);

const petals = ['#f09a37', '#f2d43c', '#a9ce4f', '#63b26a', '#63a7de', '#8e7cc4', '#c774a6', '#ea5a47'];
const Petal = styled.ellipse`
  mix-blend-mode: multiply;
`;
const PhotosApp = () => (
  <Tile>
    {petals.map((c, i) => (
      <Petal key={c} cx="44" cy="24" rx="11.500" ry="18" fill={c} opacity=".88" transform={`rotate(${i * 45} 44 44)`} />
    ))}
  </Tile>
);

const CalendarTile = styled.span`
  display: flex;
  flex-direction: column;
  width: 88px;
  height: 88px;
  border-radius: 20px;
  overflow: hidden;
  background: #fafafa;
  text-align: center;
  color: #29292b;
`;

const CalendarMonth = styled.span`
  height: 28px;
  background: #e2594c;
  color: #fff;
  font-size: 18px;
  font-weight: 600;
  line-height: 31px;
`;

const CalendarDay = styled.span`
  font-size: 54px;
  font-weight: 300;
  line-height: 56px;
  letter-spacing: -2px;
`;

const ContactsApp = () => (
  <svg width="92" height="88" viewBox="0 0 92 88">
    <path d="M84 12h3a4 4 0 0 1 4 4v12h-7z" fill="#c5c5c8" />
    <path d="M84 30h7v16h-7z" fill="#6bbcf0" />
    <path d="M84 46h7v16h-7z" fill="#f09a37" />
    <path d="M84 62h7v10a4 4 0 0 1-4 4h-3z" fill="#6ad86a" />
    <rect width="87" height="88" rx="18" fill="#8f6d3e" />
    <rect x="5" width="82" height="88" rx="16" fill="#aa8450" />
    <circle cx="45" cy="44" r="27" fill="none" stroke="#86663a" strokeWidth="2.400" />
    <circle cx="45" cy="38" r="10" fill="#8a693b" />
    <path d="M26 63C28 50 62 50 64 63C54 74 36 74 26 63z" fill="#8a693b" />
  </svg>
);

const RemindersApp = () => (
  <Tile fill="#fbfbfb">
    {['#3b7bf0', '#e34b3e', '#ee9a36'].map((c, i) => (
      <g key={c} transform={`translate(17 ${22 + i * 22})`}>
        <circle r="6.600" fill="none" stroke={c} strokeWidth="1.800" />
        <circle r="4.400" fill={c} />
        <path d="M16 0H62" stroke="#bfc0c4" strokeWidth="2" />
      </g>
    ))}
  </Tile>
);

const NotesApp = () => (
  <svg width="88" height="88" viewBox="0 0 88 88">
    <defs>
      <clipPath id="nClip"><rect width="88" height="88" rx="20" /></clipPath>
    </defs>
    <g clipPath="url(#nClip)">
      <rect width="88" height="88" fill="#f2f1ee" />
      <rect width="88" height="22" fill="#f6cf4c" />
      <path d="M0 23.500h88" stroke="#b9b3a4" strokeWidth="2" />
      <path d="M0 27.500h88" stroke="#cfcdc8" strokeWidth="2" strokeDasharray="2 2" />
      <path d="M0 44.500h88M0 66.500h88" stroke="#d6d5d3" strokeWidth="2" />
    </g>
  </svg>
);

const SiriApp = () => (
  <svg width="88" height="88" viewBox="0 0 88 88">
    <defs>
      <linearGradient id="siBg" x1="0" y1="0" x2="1" y2=".3">
        <stop offset="0" stopColor="#641632" />
        <stop offset=".5" stopColor="#152a38" />
        <stop offset="1" stopColor="#17484a" />
      </linearGradient>
    </defs>
    <rect width="88" height="88" rx="20" fill="url(#siBg)" />
    <path d="M20 84q24-14 48 0v4H24z" fill="#1c3f9a" opacity=".8" />
    <g transform="translate(6 6)">
      <SiriOrb size={76} />
    </g>
  </svg>
);

const SettingsApp = () => (
  <svg width="88" height="88" viewBox="0 0 88 88">
    <defs>
      <linearGradient id="gBg" x1="0" y1="0" x2="0" y2="1">
        <stop offset="0" stopColor="#d6e1e8" />
        <stop offset="1" stopColor="#8f8f8d" />
      </linearGradient>
    </defs>
    <rect width="88" height="88" rx="20" fill="url(#gBg)" />
    <circle cx="44" cy="44" r="37.500" fill="#1e2022" />
    <circle cx="44" cy="44" r="33" fill="none" stroke="#a8adb0" strokeWidth="4" strokeDasharray="1.600 1.900" />
    <circle cx="44" cy="44" r="29" fill="none" stroke="#a4a9ac" strokeWidth="4" />
    <circle cx="44" cy="44" r="19" fill="#5a5d60" stroke="#84888b" strokeWidth="4" strokeDasharray="1.600 1.600" />
    <circle cx="44" cy="44" r="15" fill="#606366" />
    <path d="M44 44H73M44 44L29.500 19M44 44L29.500 69" stroke="#b2b7ba" strokeWidth="4" />
    <circle cx="44" cy="44" r="4" fill="#55585b" stroke="#b2b7ba" strokeWidth="2.400" />
  </svg>
);

const TvTile = styled.span`
  width: 88px;
  height: 88px;
  display: flex;
  align-items: center;
  justify-content: center;
  border-radius: 20px;
  background: linear-gradient(#2b3a36, #101516);
  color: #fff;
  font-size: 36px;
  font-weight: 500;
  letter-spacing: -0.5px;
  line-height: 88px;
`;

const MusicApp = () => (
  <svg width="88" height="88" viewBox="0 0 88 88">
    <defs>
      <linearGradient id="muBg" x1="0" y1="0" x2="0" y2="1">
        <stop offset="0" stopColor="#ea6176" />
        <stop offset="1" stopColor="#e83b47" />
      </linearGradient>
    </defs>
    <rect width="88" height="88" rx="20" fill="url(#muBg)" />
    <path d="M31 23a3 3 0 0 1 2.500-3L61 14.500a2 2 0 0 1 2.500 2V58c0 10-17 12-17 2 0-7 8-8 13-9V29L35 34v30c0 10-18 12-18 2 0-7 9-8 14-9z" fill="#fff" />
  </svg>
);

const AppStoreApp = () => (
  <svg width="88" height="88" viewBox="0 0 88 88">
    <defs>
      <linearGradient id="asBg" x1="0" y1="0" x2="0" y2="1">
        <stop offset="0" stopColor="#53b5ee" />
        <stop offset="1" stopColor="#2a5fd8" />
      </linearGradient>
    </defs>
    <rect width="88" height="88" rx="20" fill="url(#asBg)" />
    <g stroke="#f2f5fb" strokeWidth="7" strokeLinecap="round">
      <path d="M50 20L30 53M40 20L66 67M17 54.500H50M61 54.500H72M24 65L22 68" />
    </g>
  </svg>
);

const BraveApp = () => (
  <svg width="92" height="92" viewBox="0 0 92 92">
    <defs>
      <linearGradient id="brG" x1="0" y1="0" x2="1" y2="0">
        <stop offset="0" stopColor="#f0702c" />
        <stop offset="1" stopColor="#ea3520" />
      </linearGradient>
    </defs>
    <rect width="92" height="92" rx="21" fill="#fff" />
    <SiBrave x={4} y={4} size={84} fill="url(#brG)" />
  </svg>
);

const TeamsApp = () => (
  <Tile>
    <circle cx="45" cy="24" r="9" fill="#7b83e6" />
    <circle cx="64" cy="26" r="7" fill="#5059c9" />
    <path d="M57 36H74V52a11 11 0 0 1-17 9z" fill="#5059c9" />
    <path d="M29 36H60V56C60 78 29 78 29 56z" fill="#7b83e6" />
    <rect x="10" y="27" width="33" height="33" rx="3" fill="#4a52b4" />
    <text x="26.500" y="52" textAnchor="middle" fontFamily={sans} fontWeight="600" fontSize="24" fill="#fff">
      T
    </text>
  </Tile>
);

const TerminalApp = () => (
  <svg width="88" height="88" viewBox="0 0 88 88">
    <rect x="1" width="86" height="88" rx="20" fill="#a9b0b2" />
    <rect x="3" y="3" width="82" height="82" rx="18" fill="#050505" />
    <rect x="10" y="10" width="68" height="68" rx="12" fill="#262626" />
    <text x="14" y="30" fontFamily="'DejaVu Sans Mono', monospace" fontWeight="700" fontSize="22" fill="#fff">
      {'>_'}
    </text>
  </svg>
);

const CodeApp = () => (
  <Tile>
    <path d="M57 13V33L22 60 17 61 12 56V54z" fill="#2a66a8" />
    <path d="M12 33L18 28 57 56V75L12 36z" fill="#3277c0" />
    <path d="M57 13L73 20Q75 22 75 24V64Q75 68 73 69L57 75z" fill="#4a9be8" />
  </Tile>
);

const DocApp = () => (
  <svg width="72" height="102" viewBox="0 0 72 102">
    <path d="M10 0H42L66 36V60H10z" fill="#e4e4e6" />
    <path d="M0 10H36C52 22 62 34 70 50V102H0z" fill="#fbfbfb" />
    <path d="M44 10C46 22 46 30 46 32L66 38C60 26 52 18 44 10z" fill="#d9d9db" />
    <path d="M17 4h6v3h-6z" fill="#3b6fd0" />
    <rect x="14" y="43" width="43" height="44" rx="3" fill="#969da1" />
    <path d="M20 45h22v6H20zM19 80h38v7H19z" fill="#33373a" />
    <circle cx="35" cy="64" r="17" fill="#b9bfc2" stroke="#7f878b" strokeWidth="1.600" />
    <circle cx="35" cy="64" r="5" fill="#9fa6aa" stroke="#878e92" />
  </svg>
);

const bars = [18, 22, 25, 20, 24, 12, 26, 30, 38, 24, 28, 22, 30, 27, 20, 36, 34, 26, 24, 28];
const WindowApp = () => (
  <svg width="104" height="90" viewBox="0 0 104 90">
    <rect width="102" height="78" fill="#dfe2e6" />
    <path d="M0 3h60v8H0z" fill="#2f3338" />
    <path d="M60 3h42v8H60z" fill="#6ba6e6" />
    <path d="M24 5h23v4H24zM78 5h20v4H78z" fill="#fff" />
    <path d="M0 11h8v64H0z" fill="#3b78ee" />
    <path d="M10 12h28v22H10zM41 12h28v22H41zM72 12h29v22H72zM10 36h91v22H10zM10 60h28v14H10zM41 60h28v14H41zM72 60h29v14H72z" fill="#2c3036" />
    <path d="M13 43h86v14H13z" fill="#23406e" />
    {bars.map((h, i) => (
      <rect key={i} x={14 + i * 4.2} y={57 - h * 0.36} width="2.600" height={h * 0.36} fill="#3f8f7c" />
    ))}
    <path d="M19 18h9M17 22h13M19 26h9" stroke="#8fa6c0" strokeWidth="1.200" />
    <path d="M47 20h17" stroke="#c4c8cc" strokeWidth="1.200" />
    <path d="M49 25h13" stroke="#4fae5c" strokeWidth="1.200" />
    <path d="M75 20h14" stroke="#c4c8cc" strokeWidth="1.200" />
    <path d="M75 27h20M75 30h10" stroke="#c9453c" strokeWidth="1.200" />
    <path d="M14 68h16M45 68h16" stroke="#e4e6e8" strokeWidth="2" />
    <g transform="translate(64 60)">
      <WMark w={40} h={25} />
    </g>
  </svg>
);

const TrashApp = () => (
  <svg width="80" height="102" viewBox="0 0 80 102">
    <defs>
      <linearGradient id="trG" x1="0" y1="0" x2="1" y2="0">
        <stop offset="0" stopColor="#c9c9cc" />
        <stop offset=".3" stopColor="#f1f1f2" />
        <stop offset=".7" stopColor="#e2e2e4" />
        <stop offset="1" stopColor="#bdbcc2" />
      </linearGradient>
    </defs>
    <ellipse cx="40" cy="14" rx="38" ry="10" fill="#9d9ba6" />
    <path d="M5 16L12 4 24 8 28 0 40 6 50 1 58 9 70 6 75 17 60 24H20z" fill="#e9e9ea" />
    <path d="M12 8l8 2-3 8zM34 6l8 6-10 6zM56 10l10 4-8 6z" fill="#5a5d66" />
    <path d="M46 10l8 3-5 8z" fill="#8b4a3e" />
    <path d="M26 12l8 2-4 6z" fill="#4fae9a" />
    <path d="M1 14C8 26 72 26 79 14L68 92C66 104 14 104 12 92z" fill="url(#trG)" opacity=".96" />
    <path d="M16 36l10 18-4 28M66 34l-8 20" stroke="#dadadd" strokeWidth="3" fill="none" opacity=".7" />
  </svg>
);

type DockDef = { art: React.ReactNode; running?: boolean; badge?: string; lift?: number };
const mainApps: DockDef[] = [
  { art: <FinderApp />, running: true },
  { art: <LaunchpadApp /> },
  { art: <SafariApp /> },
  { art: <MapsApp /> },
  { art: <PhotosApp /> },
  {
    art: (
      <CalendarTile>
        <CalendarMonth>MAR</CalendarMonth>
        <CalendarDay>16</CalendarDay>
      </CalendarTile>
    ),
  },
  { art: <ContactsApp /> },
  { art: <RemindersApp /> },
  { art: <NotesApp /> },
  { art: <SiriApp /> },
  { art: <SettingsApp />, running: true, badge: '2' },
  {
    art: (
      <TvTile>
        <FaApple size={31} />
        tv
      </TvTile>
    ),
  },
  { art: <MusicApp /> },
  { art: <AppStoreApp /> },
  { art: <BraveApp />, running: true, lift: 2 },
];
const recentApps: DockDef[] = [
  { art: <WMark w={104} h={63} />, running: true, lift: -13 },
  { art: <TeamsApp />, running: true },
  { art: <TerminalApp />, running: true },
  { art: <CodeApp />, running: true },
];
const stackItems: DockDef[] = [
  { art: <DocApp />, lift: 8 },
  { art: <WindowApp />, lift: -5 },
  { art: <TrashApp />, lift: 8 },
];

const DockItem = ({ art, running, badge, lift }: DockDef) => (
  <DockCell>
    <DockArt $lift={lift}>{art}</DockArt>
    {badge && <Badge>{badge}</Badge>}
    {running && <RunningDot />}
  </DockCell>
);

const Dock = () => (
  <DockRoot>
    {mainApps.map((a, i) => (
      <DockItem key={i} {...a} />
    ))}
    <DockDivider $w={53} />
    {recentApps.map((a, i) => (
      <DockItem key={i} {...a} />
    ))}
    <DockDivider $w={53} />
    {stackItems.map((a, i) => (
      <DockItem key={i} {...a} />
    ))}
  </DockRoot>
);

export default function App() {
  return (
    <Desktop>
      <Global />
      <Wallpaper />
      <MenuBar />
      <Finder />
      <BackWindow />
      <Editor />
      <BrowserShadow />
      <Browser />
      <ScreenshotFile>
        Screenshot
        <br />
        2022-0....24.10 PM
      </ScreenshotFile>
      <TrackerBar>
        <TrackerTime>07:48:53</TrackerTime>
        <FlagIcon />
        <TrackerTask>No task</TrackerTask>
      </TrackerBar>
      <ShareBar>
        <GhostRow>
          <Text $track={-0.4}>⟠ You, 1 second ago</Text>
          <Text $track={-0.4}>Ln 18, Col 1</Text>
          <Text $track={-0.4}>Spaces: 4</Text>
          <Text $track={-0.4}>UTF-8</Text>
        </GhostRow>
        <Grip />
        <ShareText>meet.google.com is sharing your screen.</ShareText>
        <StopButton>Stop sharing</StopButton>
        <HideLink>Hide</HideLink>
      </ShareBar>
      <Dock />
    </Desktop>
  );
}
